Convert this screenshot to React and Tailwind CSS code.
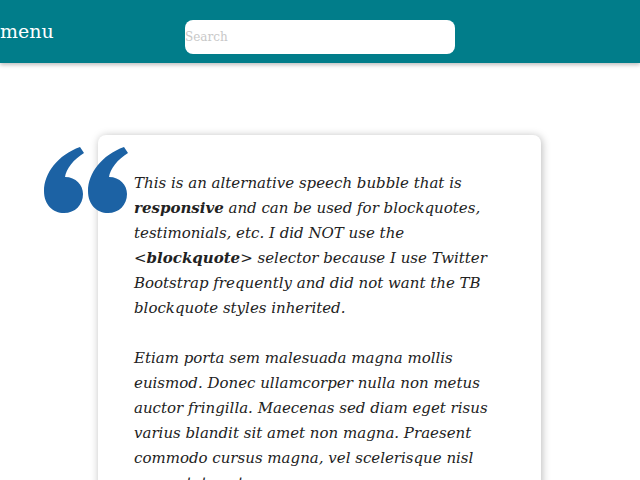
function QuoteMark() {
  const mark = "M36 0 L40 6 C30 12 22 22 21 30 C32 30 39 38 39 47 C39 58 31 66 20 66 C9 66 0 58 0 44 C0 26 14 8 36 0 Z";
  return (
    <svg width="84" height="66" viewBox="0 0 84 66" className="absolute left-[44px] top-[84px]">
      <path d={mark} fill="#1c62a4" />
      <path d={mark} fill="#1c62a4" transform="translate(44 0)" />
    </svg>
  );
}

export default function App() {
  return (
    <div className="min-h-screen bg-white font-['DejaVu_Serif',serif] overflow-hidden">
      <header className="h-[63px] bg-[#017d8a] flex items-center shadow-[0_2px_4px_rgba(0,0,0,0.25)] relative z-10">
        <span className="text-white text-[19px] w-[185px]">menu</span>
        <input
          type="text"
          placeholder="Search"
          className="w-[270px] h-[34px] mt-[10px] bg-white rounded-lg text-[12px] placeholder:text-[#c8c8c8] outline-none"
        />
      </header>

      <main className="relative pt-[72px] pl-[98px]">
        <QuoteMark />
        <div className="w-[443px] bg-white rounded-lg shadow-[1px_1px_8px_rgba(0,0,0,0.28)] pt-9 pl-9 pr-9 pb-8 italic text-[15px] leading-[25px] text-[#222]">
          <p>
            This is an alternative speech bubble that is <b>responsive</b> and can be used for blockquotes,
            testimonials, etc. I did NOT use the &lt;<b>blockquote</b>&gt; selector because I use Twitter
            Bootstrap frequently and did not want the TB blockquote styles inherited.
          </p>
          <p className="mt-[25px]">
            Etiam porta sem malesuada magna mollis euismod. Donec ullamcorper nulla non metus auctor fringilla.
            Maecenas sed diam eget risus varius blandit sit amet non magna. Praesent commodo cursus magna, vel
            scelerisque nisl consectetur et.
          </p>
        </div>
      </main>
    </div>
  );
}
